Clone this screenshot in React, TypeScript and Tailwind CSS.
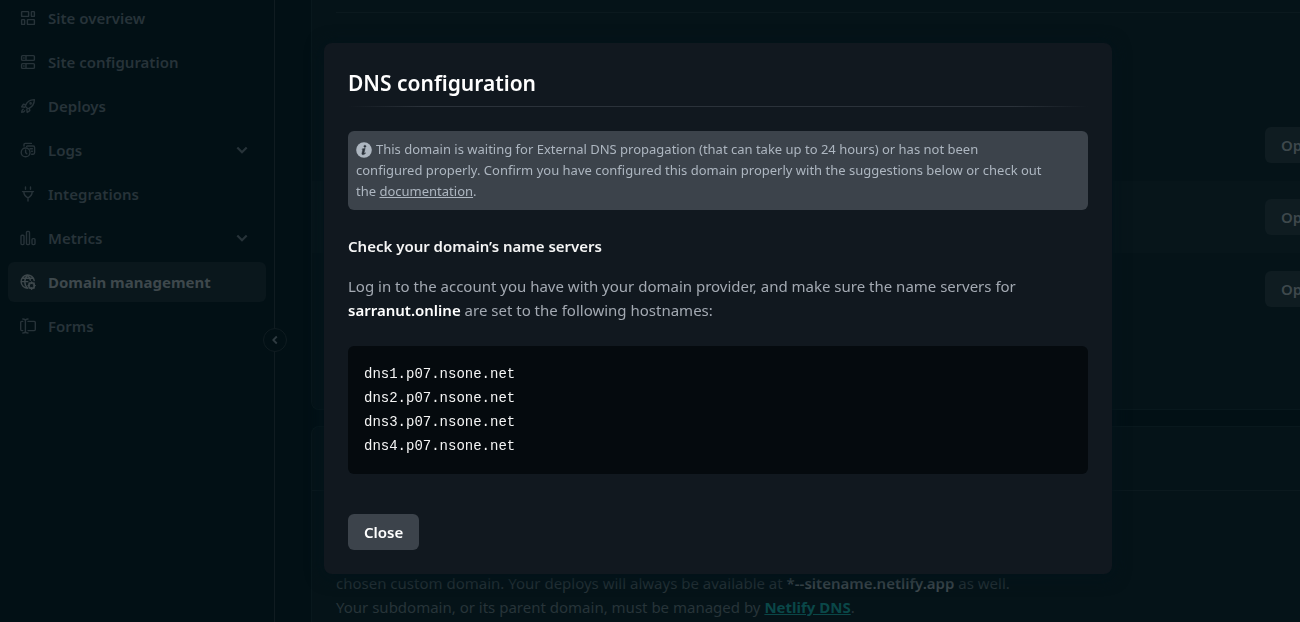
import type { ReactNode } from "react";

function Icon({ children }: { children: ReactNode }) {
  return (
    <svg
      viewBox="0 0 16 16"
      className="size-4 shrink-0"
      fill="none"
      stroke="currentColor"
      strokeWidth="1.4"
      strokeLinecap="round"
      strokeLinejoin="round"
      aria-hidden="true"
    >
      {children}
    </svg>
  );
}

const icons = {
  overview: (
    <Icon>
      <rect x="1.6" y="1.6" width="7" height="4.8" rx="0.5" />
      <rect x="11.4" y="1.6" width="3" height="4.8" rx="0.5" />
      <rect x="1.6" y="9.6" width="3" height="4.8" rx="0.5" />
      <rect x="7.4" y="9.6" width="7" height="4.8" rx="0.5" />
    </Icon>
  ),
  configuration: (
    <Icon>
      <rect x="1.6" y="1.6" width="12.8" height="4.8" rx="1" />
      <rect x="1.6" y="9.6" width="12.8" height="4.8" rx="1" />
      <path d="M6 1.8v4.4M6 9.8v4.4M3.7 4h.4M3.7 12h.4" />
    </Icon>
  ),
  deploys: (
    <Icon>
      <path d="M5.2 8.2C6.4 4.6 9.4 1.6 14.4 1.6c0 5-3 8-6.6 9.2L5.2 8.2Z" />
      <path d="M5.6 6.6 3.4 6.2 1.6 8.8l3 .4M9.4 10.4l.4 2.2L7.2 14.4l-.4-3M3.2 11.2c-1.2.6-1.5 1.8-1.5 3.1 1.3 0 2.5-.3 3.1-1.5" />
      <circle cx="10.6" cy="5.4" r="0.6" />
    </Icon>
  ),
  logs: (
    <Icon>
      <path d="M4 4V2.6a1.2 1.2 0 0 1 1.2-1.2h6.2M6.6 4.4A1.2 1.2 0 0 1 7.8 4h5.4a1.4 1.4 0 0 1 1.4 1.4v5.4a1.4 1.4 0 0 1-1.4 1.4h-1.6M10 6.8h2.4M11.6 9.2h.8" />
      <circle cx="5.6" cy="10.4" r="4.4" />
      <path d="M5.6 8v2.6l1.2 1.2" />
    </Icon>
  ),
  integrations: (
    <Icon>
      <path d="M5.5 1v2.2M10.5 1v2.2M2.5 5.6h11M3.8 5.6c0 3.2 1.4 5 4.2 6.2 2.8-1.2 4.2-3 4.2-6.2M8 11.8V15" />
    </Icon>
  ),
  metrics: (
    <Icon>
      <rect x="1" y="5.2" width="3" height="9.4" rx="1" />
      <rect x="6.5" y="1.4" width="3" height="13.2" rx="1" />
      <rect x="12" y="8.6" width="3" height="6" rx="1" />
    </Icon>
  ),
  domain: (
    <Icon>
      <path d="M14.2 6.6A6.6 6.6 0 1 0 7.4 14.2M1.4 7.6h6.4M7.6 1.2C5.4 3 4.8 5.2 4.8 7.6s.8 4.8 2.6 6.4M7.6 1.2c1.5 1.2 2.4 3 2.7 5M2.4 4.2h10.800" />
      <circle cx="11.6" cy="11.6" r="2.9" />
      <path d="M11.6 8v1.4M11.6 13.8v1.4M8 11.6h1.4M13.8 11.6h1.4M9.1 9.1l.8.8M13.3 13.3l.8.8M14.1 9.1l-.8.8M9.9 13.3l-.8.8" />
    </Icon>
  ),
  forms: (
    <Icon>
      <path d="M2.8 3.4H1.7a1 1 0 0 0-1 1v7.2a1 1 0 0 0 1 1h1.1M8 3.4h6.3a1 1 0 0 1 1 1v7.2a1 1 0 0 1-1 1H8M5.4 2.8v10.400M2.8 1c1.5 0 2.6.6 2.6 1.8C5.4 1.6 6.5 1 8 1M2.8 15c1.5 0 2.6-.6 2.6-1.8 0 1.2 1.1 1.8 2.6 1.8" />
    </Icon>
  ),
};

const items: { label: string; icon: ReactNode; expandable?: boolean; active?: boolean }[] = [
  { label: "Site overview", icon: icons.overview },
  { label: "Site configuration", icon: icons.configuration },
  { label: "Deploys", icon: icons.deploys },
  { label: "Logs", icon: icons.logs, expandable: true },
  { label: "Integrations", icon: icons.integrations },
  { label: "Metrics", icon: icons.metrics, expandable: true },
  { label: "Domain management", icon: icons.domain, active: true },
  { label: "Forms", icon: icons.forms },
];

function Sidebar() {
  return (
    <aside className="relative w-[275px] shrink-0 border-r border-[#101c21] px-2">
      <nav className="-mt-0.5 flex flex-col gap-1">
        {items.map((item) => (
          <a
            key={item.label}
            href="#"
            className={
              item.active
                ? "flex h-10 items-center gap-3 rounded-md bg-[#0a171c] px-3 text-[15px] font-bold text-[#3e484c]"
                : "flex h-10 items-center gap-3 rounded-md px-3 text-[15px] font-semibold text-[#273339]"
            }
          >
            {item.icon}
            <span className="grow">{item.label}</span>
            {item.expandable && (
              <svg viewBox="0 0 12 12" className="mr-1.5 size-3" fill="none" stroke="currentColor" strokeWidth="2.2" aria-hidden="true">
                <path d="m1.3 3.5 4.7 4.7 4.7-4.7" />
              </svg>
            )}
          </a>
        ))}
      </nav>
      <button
        type="button"
        aria-label="Collapse sidebar"
        className="absolute top-[328px] -right-[13px] flex size-6 items-center justify-center rounded-full border border-[#101c21] bg-[#021015] text-[#2f3b41]"
      >
        <svg viewBox="0 0 8 10" className="h-2.5 w-2" fill="none" stroke="currentColor" strokeWidth="1.8" aria-hidden="true">
          <path d="M5.8 1.5 2.3 5l3.5 3.5" />
        </svg>
      </button>
    </aside>
  );
}

function DomainRow({ shaded }: { shaded?: boolean }) {
  return (
    <div className={shaded ? "flex justify-end bg-[#07151a] px-6 py-[18px]" : "flex justify-end px-6 py-[18px]"}>
      <button
        type="button"
        className="flex h-9 w-[122px] items-center justify-between rounded-md bg-[#0f1c21] px-4 text-[15px] font-semibold text-[#3e484c]"
      >
        Options
      </button>
    </div>
  );
}

function Page() {
  return (
    <div className="flex h-screen min-w-[1436px]">
      <Sidebar />
      <main className="flex grow flex-col gap-4 pr-6 pl-9">
        <section className="rounded-b-lg border-x border-b border-[#09181d] bg-[#051318] pb-[84px]">
          <div className="mx-6 h-[13px] border-b border-[#0b191e]" />
          <div className="pt-24">
            <DomainRow />
            <DomainRow shaded />
            <DomainRow />
          </div>
        </section>
        <section className="grow rounded-t-lg border-x border-t border-[#09181d] bg-[#051318]">
          <div className="h-16 border-b border-[#0b191e]" />
          <p className="px-6 pt-20 text-[15px] leading-6 text-[#273439]">
            chosen custom domain. Your deploys will always be available at{" "}
            <strong className="font-semibold text-[#3f4a4f]">*--sitename.netlify.app</strong> as well.
            <br />
            Your subdomain, or its parent domain, must be managed by{" "}
            <a href="#" className="font-bold text-[#0a4748] underline">
              Netlify DNS
            </a>
            .
          </p>
        </section>
      </main>
    </div>
  );
}

const nameServers = ["dns1.p07.nsone.net", "dns2.p07.nsone.net", "dns3.p07.nsone.net", "dns4.p07.nsone.net"];

function DnsDialog() {
  return (
    <div className="fixed inset-0 flex items-start justify-center pt-[43px] pl-[136px]">
      <div
        role="dialog"
        aria-modal="true"
        aria-labelledby="dns-title"
        className="w-full max-w-[788px] rounded-lg bg-[#11181f] p-6 shadow-[0_2px_16px_2px_#03131a]"
      >
        <h2 id="dns-title" className="text-[21px] leading-8 font-semibold text-white">
          DNS configuration
        </h2>
        <div className="mt-[7px] h-px bg-[linear-gradient(to_right,transparent,#2b323a_10%,#2b323a_90%,transparent)]" />

        <div className="mt-6 rounded-md bg-[#3c434b] p-2 text-[13px] leading-[21px] text-[#adb6c0]">
          <svg viewBox="0 0 16 16" className="mr-1 inline size-4 align-text-bottom" aria-hidden="true">
            <circle cx="8" cy="8" r="7.8" fill="#adb6c0" />
            <path
              d="M8.9 3.2a1.1 1.1 0 1 0 .02 0ZM6.1 6.9l3.1-.6-1.1 4.7c-.1.5.3.5 1.3-.3l.3.4c-1 1.2-2 1.7-2.9 1.6-.9-.1-1.1-.7-.9-1.5l.8-3.4c.1-.4-.1-.5-.8-.5Z"
              fill="#2b323a"
              stroke="#2b323a"
              strokeWidth="0.4"
            />
          </svg>
          This domain is waiting for External DNS propagation (that can take up to 24 hours) or has not been
          <br />
          configured properly. Confirm you have configured this domain properly with the suggestions below or check out
          <br />
          the{" "}
          <a href="#" className="underline">
            documentation
          </a>
          .
        </div>

        <h3 className="mt-6 text-[15px] leading-6 font-semibold text-[#f5f5f5]">Check your domain’s name servers</h3>
        <p className="mt-4 text-[15px] leading-6 text-[#a3a9b2]">
          Log in to the account you have with your domain provider, and make sure the name servers for{" "}
          <strong className="font-semibold text-white">sarranut.online</strong> are set to the following hostnames:
        </p>

        <pre className="mt-6 rounded-md bg-[#050a0e] p-4 font-['Courier_New','Liberation_Mono',monospace] text-sm leading-6 text-[#f5f5f5]">
          {nameServers.join("\n")}
        </pre>

        <button type="button" className="mt-10 block h-9 rounded-md bg-[#3c434b] px-4 text-[15px] font-semibold text-white">
          Close
        </button>
      </div>
    </div>
  );
}

export default function App() {
  return (
    <div className="h-screen overflow-hidden bg-[#021015] font-['Noto_Sans',sans-serif]">
      <Page />
      <DnsDialog />
    </div>
  );
}
